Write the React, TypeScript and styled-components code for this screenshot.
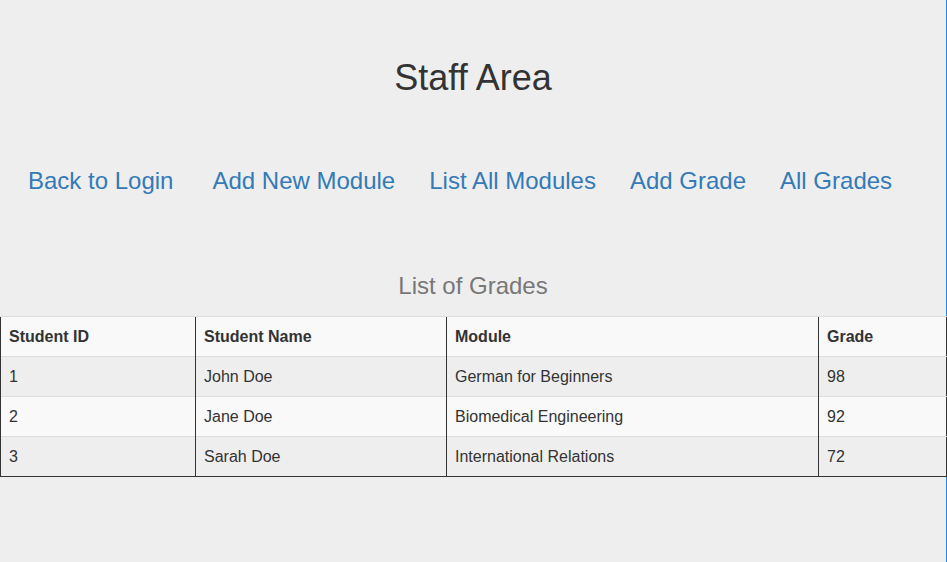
import React from "react";
import styled, { createGlobalStyle } from "styled-components";

const GlobalStyle = createGlobalStyle`
  html, body {
    margin: 0;
    padding: 0;
    background: #eeeeee;
  }
  body {
    font-family: "Liberation Sans", Arial, sans-serif;
    color: #333333;
  }
`;

const Page = styled.div`
  width: 946px;
  min-height: 562px;
  border-right: 1px solid #1e86e6;
  background: #eeeeee;
  display: flex;
  flex-direction: column;
`;

const Title = styled.h1`
  margin: 58px 0 0;
  font-size: 36px;
  line-height: 40px;
  font-weight: 400;
  text-align: center;
  color: #333333;
`;

const Nav = styled.nav`
  margin-top: 68px;
  padding-left: 28px;
  display: flex;
  gap: 34px;
`;

const NavLink = styled.a<{ $extra?: number }>`
  font-size: 24px;
  line-height: 30px;
  color: #337ab7;
  text-decoration: none;
  margin-right: ${(p) => p.$extra ?? 0}px;
  white-space: nowrap;
`;

const SubTitle = styled.h2`
  margin: 75px 0 0;
  font-size: 24px;
  line-height: 30px;
  font-weight: 400;
  text-align: center;
  color: #777777;
`;

const Table = styled.table`
  margin-top: 15px;
  width: 946px;
  table-layout: fixed;
  border-collapse: collapse;
  font-size: 16px;
  line-height: 23px;
  border-left: 1px solid #333333;
  border-right: 1px solid #333333;
  border-bottom: 1px solid #333333;
`;

const Row = styled.tr<{ $shade: boolean }>`
  background: ${(p) => (p.$shade ? "#eeeeee" : "#f9f9f9")};
`;

const HeadCell = styled.th`
  text-align: left;
  font-weight: 700;
  padding: 8px;
  border-top: 1px solid #dddddd;
  border-left: 1px solid #333333;
  color: #333333;
`;

const Cell = styled.td`
  padding: 8px;
  border-top: 1px solid #dddddd;
  border-left: 1px solid #333333;
  color: #333333;
`;

const links = [
  "Back to Login",
  "Add New Module",
  "List All Modules",
  "Add Grade",
  "All Grades",
];

const grades = [
  { id: 1, name: "John Doe", module: "German for Beginners", grade: 98 },
  { id: 2, name: "Jane Doe", module: "Biomedical Engineering", grade: 92 },
  { id: 3, name: "Sarah Doe", module: "International Relations", grade: 72 },
];

export default function App() {
  return (
    <>
      <GlobalStyle />
      <Page>
        <Title>Staff Area</Title>
        <Nav>
          {links.map((l, i) => (
            <NavLink key={l} href="#" $extra={i === 0 ? 5 : 0}>
              {l}
            </NavLink>
          ))}
        </Nav>
        <SubTitle>List of Grades</SubTitle>
        <Table>
          <colgroup>
            <col style={{ width: 195 }} />
            <col style={{ width: 251 }} />
            <col style={{ width: 372 }} />
            <col style={{ width: 128 }} />
          </colgroup>
          <thead>
            <Row $shade={false}>
              <HeadCell>Student ID</HeadCell>
              <HeadCell>Student Name</HeadCell>
              <HeadCell>Module</HeadCell>
              <HeadCell>Grade</HeadCell>
            </Row>
          </thead>
          <tbody>
            {grades.map((g, i) => (
              <Row key={g.id} $shade={i % 2 === 0}>
                <Cell>{g.id}</Cell>
                <Cell>{g.name}</Cell>
                <Cell>{g.module}</Cell>
                <Cell>{g.grade}</Cell>
              </Row>
            ))}
          </tbody>
        </Table>
      </Page>
    </>
  );
}
